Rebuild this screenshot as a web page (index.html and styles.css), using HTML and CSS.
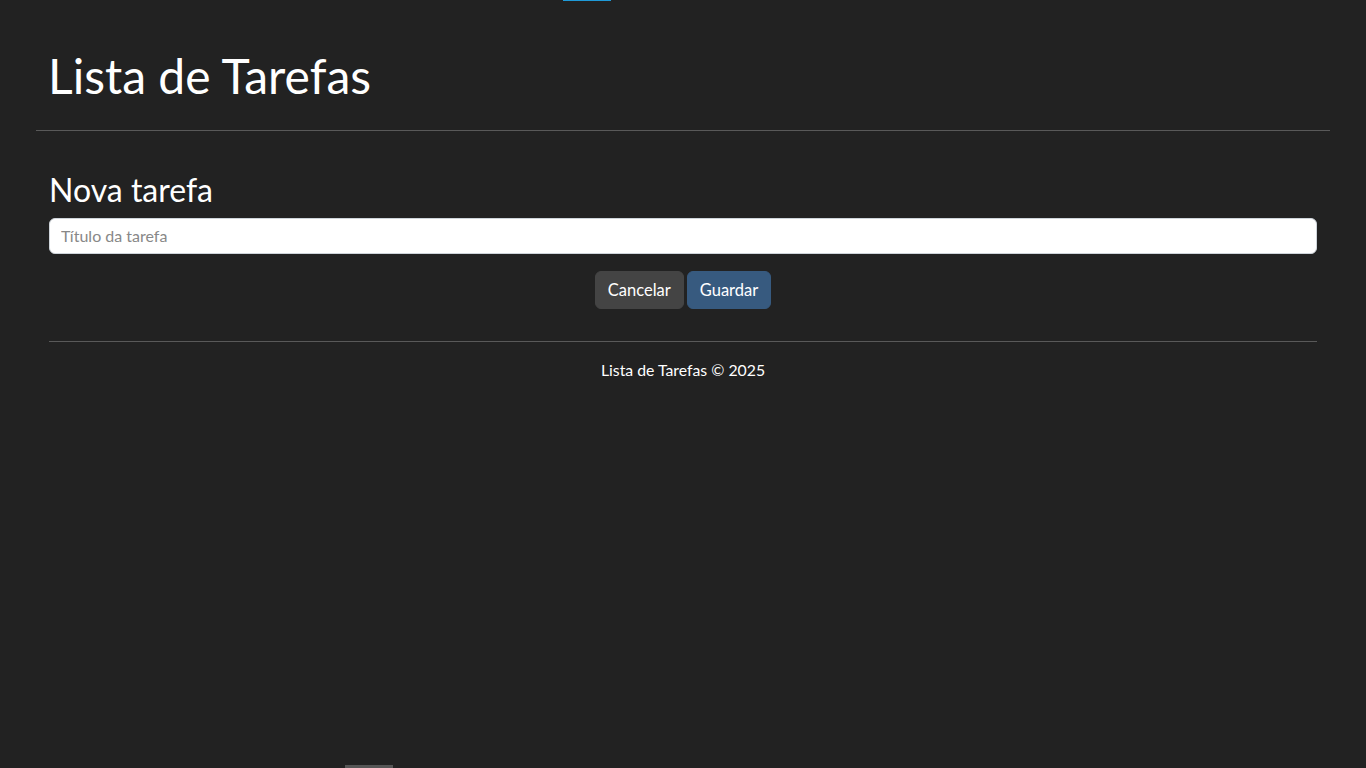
FILE: index.html
```html
<!DOCTYPE html>
<html lang="pt">
<head>
<meta charset="utf-8">
<title>Lista de Tarefas</title>
<link rel="stylesheet" href="styles.css">
</head>
<body>
<div class="edge-top"></div>
<header class="header">
  <h1 class="title">Lista de Tarefas</h1>
  <hr class="rule">
</header>
<main class="main">
  <h2 class="subtitle">Nova tarefa</h2>
  <input class="field" type="text" placeholder="Título da tarefa">
  <div class="actions">
    <button class="btn btn-secondary" type="button">Cancelar</button>
    <button class="btn btn-primary" type="button">Guardar</button>
  </div>
  <hr class="rule rule-footer">
  <footer class="footer">Lista de Tarefas © 2025</footer>
</main>
<div class="edge-bottom"></div>
</body>
</html>
```

FILE: styles.css
```css
html, body {
  margin: 0;
  padding: 0;
}
body {
  background: #222222;
  color: #ffffff;
  font-family: Lato, "Open Sans", sans-serif;
  font-size: 16px;
  line-height: 1.5;
  min-height: 768px;
}
.edge-top {
  position: absolute;
  top: 0;
  left: 563px;
  width: 48px;
  height: 1px;
  background: #1f9ad8;
}
.edge-bottom {
  position: absolute;
  top: 765px;
  left: 345px;
  width: 48px;
  height: 3px;
  background: #565656;
}
.header {
  margin: 0 36px;
  padding-top: 47px;
}
.title {
  margin: 0 0 25px;
  padding: 0 12px;
  font-size: 48px;
  font-weight: 400;
  line-height: 1.2;
}
.rule {
  margin: 0;
  border: 0;
  border-top: 1px solid #595959;
}
.main {
  padding: 40px 49px 0;
  display: flex;
  flex-direction: column;
}
.subtitle {
  margin: 0 0 9px;
  padding-left: 0;
  font-size: 32px;
  font-weight: 400;
  line-height: 1.2;
}
.field {
  box-sizing: border-box;
  height: 36px;
  width: 100%;
  padding: 4px 11px;
  border: 1px solid #ced4da;
  border-radius: 6px;
  background: #ffffff;
  font-family: inherit;
  font-size: 16px;
  color: #222;
}
.field::placeholder {
  color: #888888;
}
.actions {
  display: flex;
  justify-content: center;
  gap: 3px;
  margin-top: 17px;
}
.btn {
  box-sizing: border-box;
  height: 38px;
  padding: 0 12px;
  border: 1px solid transparent;
  border-radius: 6px;
  color: #ffffff;
  font-family: inherit;
  font-size: 16.5px;
  line-height: 1.5;
}
.btn-secondary {
  background: #444444;
  border-color: #444444;
}
.btn-primary {
  background: #375a7f;
  border-color: #375a7f;
}
.rule-footer {
  margin-top: 32px;
}
.footer {
  margin-top: 16px;
  text-align: center;
  font-size: 15.8px;
  line-height: 1.5;
}
```
